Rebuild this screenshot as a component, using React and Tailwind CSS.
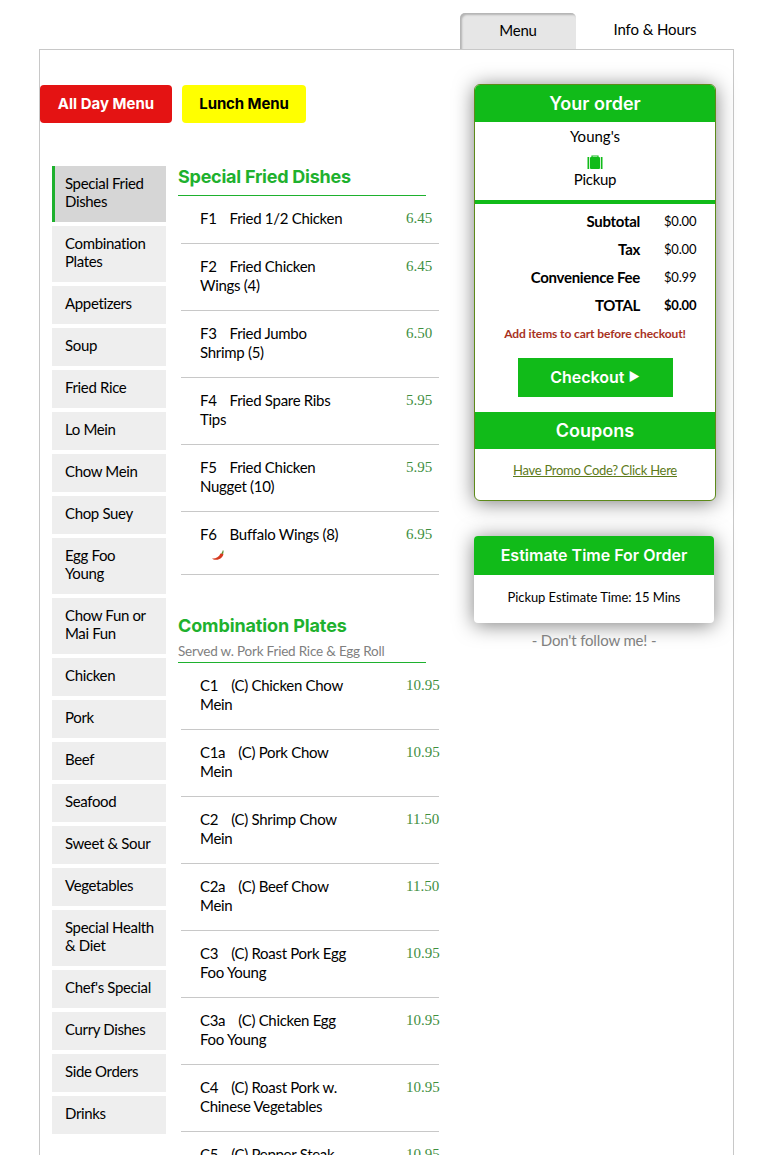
const cats = [
  ["Special Fried Dishes", true],["Combination Plates"],["Appetizers"],["Soup"],["Fried Rice"],["Lo Mein"],["Chow Mein"],["Chop Suey"],["Egg Foo Young"],["Chow Fun or Mai Fun"],["Chicken"],["Pork"],["Beef"],["Seafood"],["Sweet & Sour"],["Vegetables"],["Special Health & Diet"],["Chef's Special"],["Curry Dishes"],["Side Orders"],["Drinks"],
];
const fried = [
  ["F1","Fried 1/2 Chicken","6.45"],["F2","Fried Chicken Wings (4)","6.45"],["F3","Fried Jumbo Shrimp (5)","6.50"],["F4","Fried Spare Ribs Tips","5.95"],["F5","Fried Chicken Nugget (10)","5.95"],["F6","Buffalo Wings (8)","6.95",true],
];
const combo = [
  ["C1","(C) Chicken Chow Mein","10.95"],["C1a","(C) Pork Chow Mein","10.95"],["C2","(C) Shrimp Chow Mein","11.50"],["C2a","(C) Beef Chow Mein","11.50"],["C3","(C) Roast Pork Egg Foo Young","10.95"],["C3a","(C) Chicken Egg Foo Young","10.95"],["C4","(C) Roast Pork w. Chinese Vegetables","10.95"],["C5","(C) Pepper Steak","10.95"],
];
const Chili = () => (
  <svg width="14" height="12" viewBox="0 0 14 12" className="-mb-[2px] mt-[5px] ml-[11px] block">
    <path d="M1 9.5C4 10 8 8.5 9.5 4.5L12.4 4.8C12.4 8 8.5 11 5 10.8 3 10.8 1.8 10.3 1 9.5Z" fill="#d63a20"/>
    <path d="M10 4.6C10.8 3.8 11.5 3 11.6 1.5L12.6 1.6C12.6 3 12.4 4.2 12 5Z" fill="#5d8a2a"/>
  </svg>
);
const Item = ({ d }) => (
  <div className="relative ml-[3px] flex w-[258px] border-b border-[#c8c8c8] pt-[13px] pb-[15px] pl-[19px]">
    <div className="w-[153px] shrink-0 text-[15px] leading-[19px] tracking-[-0.3px] text-black">
      <span className="mr-[13px]">{d[0]}</span>{d[1]}
      {d[3] && <Chili />}
    </div>
    <div className="absolute left-[225px] top-[13px] font-['Liberation_Serif',serif] text-[15px] leading-[19px] text-[#3f8f3f]">{d[2]}</div>
  </div>
);
const Row = ({ l, v, bold }) => (
  <div className="flex h-[28px] items-center text-[15px] text-black">
    <div className="w-[165px] text-right font-bold tracking-[-0.3px]">{l}</div>
    <div className={"mt-[2px] ml-[24px] text-[13px] tracking-[-0.2px] " + (bold ? "font-bold" : "")}>{v}</div>
  </div>
);
export default function App() {
  return (
    <div className="relative h-[1155px] w-[765px] overflow-hidden bg-white font-['Lato',sans-serif]">
      <div className="flex h-[49px] pl-[460px] pt-[13px]">
        <div className="flex h-[36px] w-[116px] items-center justify-center rounded-t-[5px] bg-[#e6e6e6] pb-[2px] text-[15px] tracking-[-0.2px] text-black shadow-[inset_2px_2px_2px_#b4b4b4]">Menu</div>
        <div className="flex h-[32px] w-[158px] items-center justify-center text-[15px] tracking-[-0.1px] text-black">Info & Hours</div>
      </div>
      <div className="ml-[39px] h-[1200px] w-[695px] border border-[#c8c8c8] pt-[35px]">
        <div className="flex">
          <div className="w-[434px] shrink-0">
            <div className="flex gap-[10px] font-['Inter',sans-serif] text-[15px] font-bold">
              <div className="flex h-[38px] w-[132px] items-center justify-center rounded-[4px] bg-[#e41313] text-white">All Day Menu</div>
              <div className="flex h-[38px] w-[124px] items-center justify-center rounded-[4px] bg-[#ffff00] tracking-[-0.1px] text-black">Lunch Menu</div>
            </div>
            <div className="mt-[43px] flex pl-[12px]">
              <div className="flex w-[114px] shrink-0 flex-col gap-[4px]">
                {cats.map(([n, a]) => (
                  <div key={n} className={"pt-[8px] pb-[12px] pr-[11px] text-[15px] leading-[18px] tracking-[-0.35px] text-black " + (a ? "border-l-[3px] border-[#1eb12e] bg-[#d6d6d6] pl-[10px]" : "bg-[#eeeeee] pl-[13px]")}>{n}</div>
                ))}
              </div>
              <div className="ml-[12px] w-[262px] shrink-0">
                <div className="box-content h-[29px] w-[248px] border-b border-[#1eb12e] font-['Inter',sans-serif] text-[18px] leading-[22px] font-bold tracking-[-0.25px] text-[#1eb12e]">Special Fried Dishes</div>
                {fried.map((d) => <Item key={d[0]} d={d} />)}
                <div className="mt-[40px] w-[248px] border-b border-[#1eb12e] pb-[2px]">
                  <div className="font-['Inter',sans-serif] text-[18px] leading-[22px] font-bold tracking-[-0.12px] text-[#1eb12e]">Combination Plates</div>
                  <div className="mt-[6px] text-[13.5px] leading-[17px] tracking-[-0.2px] text-[#808080]">Served w. Pork Fried Rice & Egg Roll</div>
                </div>
                {combo.map((d) => <Item key={d[0]} d={d} />)}
              </div>
            </div>
          </div>
          <div className="-mt-[1px] w-[242px] shrink-0">
            <div className="overflow-hidden rounded-[6px] border border-[#5d8a1a] bg-white shadow-[0_2px_20px_rgba(0,0,0,0.5)]">
              <div className="flex h-[37px] items-center justify-center bg-[#11bb19] font-['Inter',sans-serif] text-[18px] font-semibold text-white">Your order</div>
              <div className="flex flex-col items-center border-b-4 border-[#11bb19] pt-[5px] pb-[11px] text-[15px] text-black">
                <div className="h-[21px] leading-[18px]">Young's</div>
                <svg width="18" height="14" viewBox="0 0 18 14" className="mt-[7px]">
                  <path d="M6 2V1h6v1" fill="none" stroke="#11bb19" strokeWidth="1.2"/>
                  <rect x="4" y="2" width="10" height="12" rx="1" fill="#11bb19"/>
                  <rect x="1.5" y="2" width="1.7" height="12" fill="#11bb19"/>
                  <rect x="14.8" y="2" width="1.7" height="12" fill="#11bb19"/>
                </svg>
                <div className="mt-[1px] mb-[1px] leading-[18px] tracking-[-0.3px]">Pickup</div>
              </div>
              <div className="pt-[3px] pb-[-1px]">
                <Row l="Subtotal" v="$0.00" />
                <Row l="Tax" v="$0.00" />
                <Row l="Convenience Fee" v="$0.99" />
                <Row l="TOTAL" v="$0.00" bold />
              </div>
              <div className="mt-[7px] text-center text-[12px] leading-[16px] font-bold tracking-[-0.1px] text-[#a8321e]">Add items to cart before checkout!</div>
              <div className="mt-[16px] flex justify-center">
                <div className="flex h-[39px] w-[155px] items-center justify-center gap-[4px] bg-[#11bb19] pb-[2px] font-['Inter',sans-serif] text-[16px] font-semibold text-white">Checkout <span className="text-[12px]">►</span></div>
              </div>
              <div className="mt-[15px] flex h-[37px] items-center justify-center bg-[#11bb19] font-['Inter',sans-serif] text-[18px] font-semibold text-white">Coupons</div>
              <div className="h-[51px] pt-[12px] text-center text-[13px] leading-[18px] tracking-[-0.28px] text-[#5d7a1a] underline">Have Promo Code? Click Here</div>
            </div>
            <div className="mt-[35px] w-[240px] overflow-hidden rounded-[4px] bg-white shadow-[0_2px_20px_rgba(0,0,0,0.5)]">
              <div className="flex h-[39px] items-center justify-center bg-[#11bb19] pb-[2px] font-['Inter',sans-serif] text-[16px] font-semibold text-white">Estimate Time For Order</div>
              <div className="flex h-[48px] items-center justify-center pb-[3px] text-[13px] tracking-[-0.08px] text-black">Pickup Estimate Time: 15 Mins</div>
            </div>
            <div className="mt-[7px] w-[240px] text-center text-[15px] leading-[20px] tracking-[-0.15px] text-[#808080]">- Don't follow me! -</div>
          </div>
        </div>
      </div>
    </div>
  );
}
